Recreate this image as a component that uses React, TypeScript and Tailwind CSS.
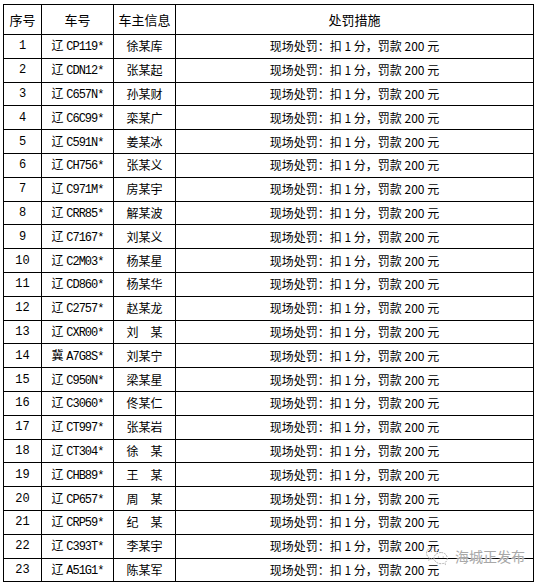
const rows: [string, string, string][] = [
  ['辽', 'CP119*', '徐某库'],
  ['辽', 'CDN12*', '张某起'],
  ['辽', 'C657N*', '孙某财'],
  ['辽', 'C6C99*', '栾某广'],
  ['辽', 'C591N*', '姜某冰'],
  ['辽', 'CH756*', '张某义'],
  ['辽', 'C971M*', '房某宇'],
  ['辽', 'CRR85*', '解某波'],
  ['辽', 'C7167*', '刘某义'],
  ['辽', 'C2M03*', '杨某星'],
  ['辽', 'CD860*', '杨某华'],
  ['辽', 'C2757*', '赵某龙'],
  ['辽', 'CXR00*', '刘　某'],
  ['冀', 'A7G8S*', '刘某宁'],
  ['辽', 'C950N*', '梁某星'],
  ['辽', 'C3060*', '佟某仁'],
  ['辽', 'CT997*', '张某岩'],
  ['辽', 'CT304*', '徐　某'],
  ['辽', 'CHB89*', '王　某'],
  ['辽', 'CP657*', '周　某'],
  ['辽', 'CRP59*', '纪　某'],
  ['辽', 'C393T*', '李某宇'],
  ['辽', 'A51G1*', '陈某军'],
];

function WeChatIcon() {
  return (
    <svg width="24" height="22" viewBox="0 0 24 22" fill="none" stroke="#b5b5b5" strokeWidth="1" strokeDasharray="2 1">
      <path d="M9 2C4.6 2 1.5 4.8 1.5 8.2c0 2 1.1 3.7 2.8 4.8l-.7 2.3 2.6-1.4c.9.3 1.8.4 2.8.4" />
      <path d="M16 7.5c-3.9 0-7 2.5-7 5.6s3.1 5.6 7 5.6c.8 0 1.6-.1 2.3-.3l2.2 1.2-.6-1.9c1.5-1 2.4-2.6 2.4-4.3 0-3.4-2.6-5.9-6.300-5.9z" />
      <circle cx="6.3" cy="6.5" r=".8" fill="#b5b5b5" stroke="none" />
      <circle cx="11.2" cy="6.5" r=".8" fill="#b5b5b5" stroke="none" />
      <circle cx="13.5" cy="12" r=".7" fill="#b5b5b5" stroke="none" />
      <circle cx="18.2" cy="12" r=".7" fill="#b5b5b5" stroke="none" />
    </svg>
  );
}

export default function App() {
  return (
    <div className="relative w-[537px] h-[583px] bg-white font-['Noto_Sans_CJK_SC',sans-serif] text-black">
      <div className="pl-[3px] pt-[4px]">
        <table className="w-[531px] table-fixed border-collapse border border-black">
          <colgroup>
            <col className="w-[38px]" />
            <col className="w-[72px]" />
            <col className="w-[62px]" />
            <col />
          </colgroup>
          <thead>
            <tr className="h-[30px]">
              <th className="border border-black p-0 text-[13px] font-normal leading-none">序号</th>
              <th className="border border-black p-0 text-[13px] font-normal leading-none">车号</th>
              <th className="border border-black p-0 text-[13px] font-normal leading-none">车主信息</th>
              <th className="border border-black p-0 text-[13px] font-normal leading-none">处罚措施</th>
            </tr>
          </thead>
          <tbody>
            {rows.map(([prov, plate, name], i) => (
              <tr key={i} className="h-[23.8px]">
                <td className="border border-black p-0 text-center font-['Liberation_Mono',monospace] text-[12px] leading-none">
                  {i + 1}
                </td>
                <td className="border border-black p-0 text-center text-[12px] leading-none whitespace-nowrap">
                  <span>{prov}</span>{' '}
                  <span className="font-['Liberation_Mono',monospace] text-[12px] tracking-[-1px]">{plate}</span>
                </td>
                <td className="border border-black p-0 text-center text-[12px] leading-none">{name}</td>
                <td className="border border-black p-0 text-center text-[12px] leading-none whitespace-nowrap">
                  现场处罚：扣 1 分，罚款 200 元
                </td>
              </tr>
            ))}
          </tbody>
        </table>
      </div>
      <div className="absolute left-[425px] top-[545px] flex items-center gap-[6px]">
        <WeChatIcon />
        <span className="text-[14px] leading-none text-[#a8a8a8] [text-shadow:0_0_2px_#fff,0_0_2px_#fff]">海城正发布</span>
      </div>
    </div>
  );
}
